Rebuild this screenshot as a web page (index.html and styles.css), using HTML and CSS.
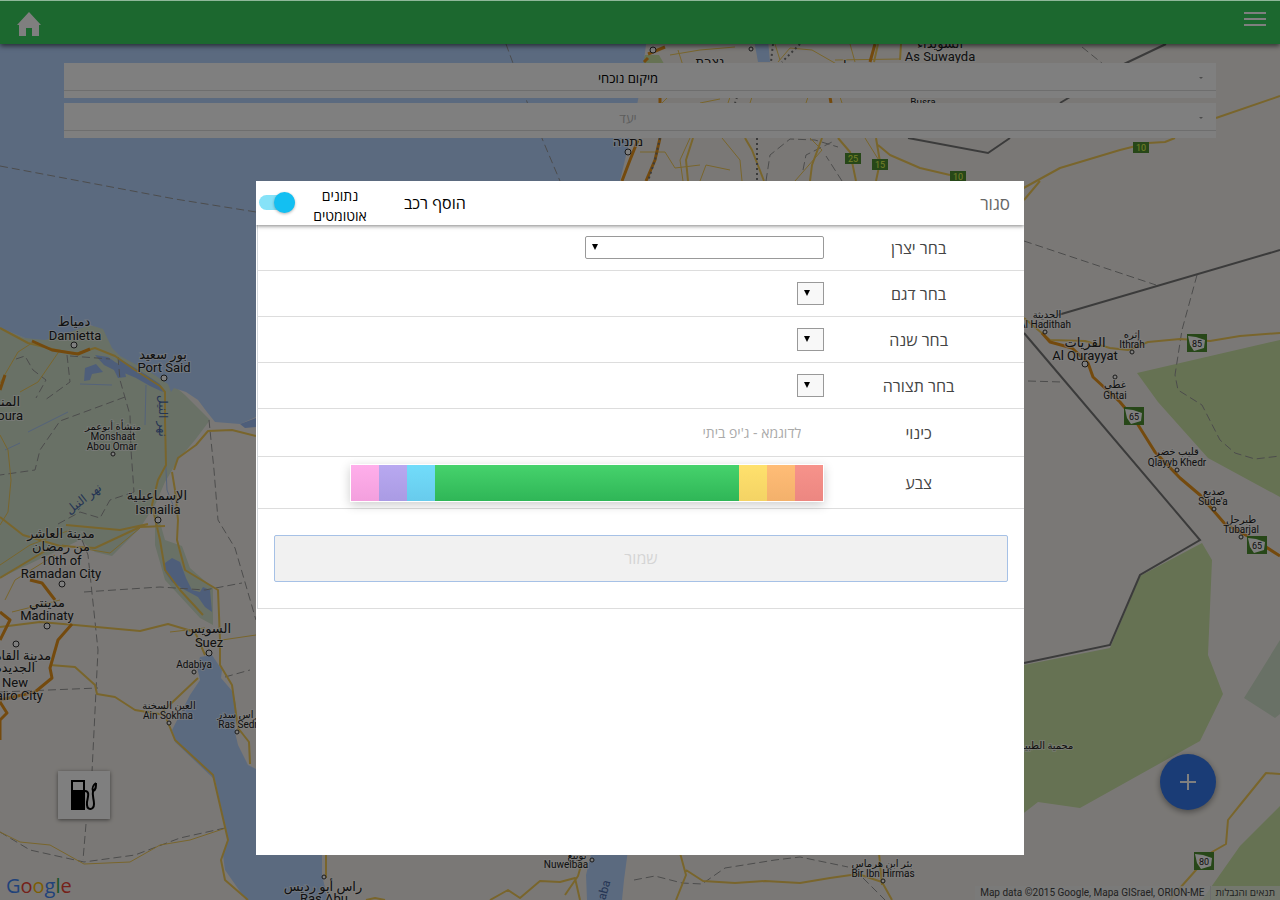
FILE: index.html
```
<!DOCTYPE html>
<html lang="he" dir="rtl">
    <head>
        <meta charset="utf-8">
        <meta name="viewport" content="width=device-width, initial-scale=1">
        <title>הוסף רכב</title>
        <link rel="stylesheet" href="styles.css">
    </head>
    <body>
        <svg class="map" viewBox="0 0 1280 900" preserveAspectRatio="xMidYMid slice" direction="ltr">
            <!-- land use -->
            <path class="delta" d="M0 328 25 338 60 335 85 325 103 327 115 348 165 378 185 395 210 420 195 440 178 460 165 482 155 505 140 528 112 556 95 552 80 540 0 578Z"/>
            <path class="delta" d="M155 505 165 540 182 546 190 568 213 588 213 625 200 618 165 580 155 545ZM1280 640 1244 698 1275 718 1280 714Z"/>
            <path class="park" d="M1137 373 1280 340 1280 497 1208 458 1158 402ZM1024 665 1110 648 1140 576 1202 543 1212 560 1208 655 1223 694 1200 741 1080 808 1038 802 1020 816 900 816 900 665ZM1280 806 1240 846 1202 900 1280 900Z"/>
            <path class="park" d="M645 55h14l8 14h-28z"/>
            <!-- water -->
            <path class="water" d="M0 0H652L640 90 632 130 620 181 600 400 256 417 240 424 215 422 207 412 198 400 186 392 174 388 171 392 168 384 150 372 120 356 112 348 103 329 90 325 65 334 45 340 25 338 0 328Z"/>
            <path class="lagoon" d="M85 368 96 364 103 372 92 374 90 380 84 381ZM95 355 108 357 115 362 124 367 126 377 118 378 114 370 104 365ZM118 358 132 366 145 374 160 384 163 392 150 386 136 378 122 372ZM240 424 256 418V427L245 428Z"/>
            <path class="water" d="M754 40H768L770 62H758Z"/>
            <path class="lagoon" d="M165 563 172 558 180 562 186 578 192 590 200 592 203 587 210 590 212 612 205 607 198 597 185 590 172 582 165 572Z"/>
            <path class="water" d="M200 657 212 655 222 670 221 678 233 692 236 705 235 732 238 745 248 765 256 769 322 850 322 875 328 900 246 900 225 870 223 855 228 840 215 780 175 742 172 730 190 695 200 680 197 667ZM592 850 586 875 587 900 622 900 624 880 628 850Z"/>
            <path class="stream" d="M165 400 166 470 167 490 175 510M146 385 145 425M80 384 112 385M28 432 68 412M5 450 20 443"/>
            <!-- administrative lines -->
            <g class="dashed">
                <path d="M0 166 85 182 175 199 256 212M506 44 530 110 560 181M16 359 25 356 33 370 46 380 36 398M67 355 70 382 45 400M118 357 120 380 130 415 131 450 134 492M125 397 60 421 40 450 35 470 0 475M209 420 214 470 218 520 235 548 256 620M82 540 88 555 98 650 92 772M84 592 160 587 205 590 242 583M86 824 83 860M0 832 30 850 84 862 135 855 180 838 225 828M225 677 250 670M58 524 80 512 100 518 110 500 134 492M70 356 110 359M0 692 98 688"/>
                <path d="M1024 241 1156 285M1197 275 1182 330 1175 375 1178 390 1202 405 1220 440 1235 453 1255 459 1280 456M1028 381 1062 382M1082 47 1103 64M766 181 770 155 790 139 815 140 838 147M803 170 806 155 832 142M842 181 826 156M634 880 655 876 682 883 702 884 725 868 750 864 775 860 800 857 848 867M863 878 885 900"/>
            </g>
            <!-- local roads -->
            <path class="road thin" d="M0 383 18 352 32 343M60 350 38 382 20 392M0 435 8 450 11 480 8 512 0 525M0 565 30 545 70 530M55 555 15 580 5 600M62 545 110 553 140 528M205 628 170 632M222 640 256 635M0 832 20 842 50 845 84 864 130 862 160 845 190 840 226 828M12 612 60 600"/>
            <path class="road thin" d="M640 152 665 152 675 168 700 165M690 138 680 160 683 181M678 50 685 72M670 55 700 50 735 47M812 50 840 66M778 62 790 48 812 50M835 60 900 59M795 181 822 150 810 138M865 138 880 162M850 44 855 62M780 60 775 44M722 138 740 160 742 181M808 97 806 103M752 97 750 103M730 97 728 103M720 99 700 103M840 97 842 103M668 97 662 103M700 181 706 165 730 170"/>
            <!-- main roads -->
            <path class="road" d="M0 328 28 343 52 349 75 354 95 348 115 356 135 370 160 386 165 392 165 420 166 465 158 480 152 505 160 540 165 570 180 590 203 615M172 472 175 490 178 520 177 540 185 570 218 590 220 640 220 665 232 685 238 728 249 742 250 764M0 517 23 535 60 546 95 548 140 527 165 526M66 525 120 530 148 524M0 578 50 548M174 470 178 458 196 445 208 431 232 430 256 436M0 627 40 622 75 625 140 631 168 624 195 632 205 655M50 665 75 667 95 685 97 694 115 697 135 710 165 715 175 740 213 775 228 840 221 860 225 880 248 900M162 712 198 678"/>
            <path class="road" d="M693 138 686 160 688 181M764 181 752 150 745 138M822 138 812 165 810 181M838 138 850 152 856 181M876 138 880 162 876 181M878 145 890 155 920 168 950 175M1020 190 1060 168 1120 150 1148 143 1165 142 1175 138M1216 118 1280 96M878 44 874 62M900 60 901 44M1024 200 1040 181M1024 318 1050 340 1085 341 1110 348 1128 350 1148 342 1180 339 1210 341 1240 336 1280 333M1280 774 1266 773 1240 805 1228 820 1226 844 1212 852 1180 888 1170 900M680 853 686 875 676 900M686 870 703 881 735 883 765 881 800 883 830 878 858 874 882 882 892 900M879 853 882 885M326 855 326 878M366 900 375 898 385 900M490 900 508 890 520 898 540 881 560 882 575 878 580 900M565 895 578 876 582 862"/>
            <path class="road highway" d="M0 390 5 375M32 341 52 350 78 354 90 349M30 580 42 583 55 600M0 612 10 620 0 640M72 624 58 640 50 668 52 678 35 692 0 700M0 702 7 713 0 720 0 740M1042 333 1050 342 1072 348 1088 363 1093 377 1120 402 1135 420 1155 452 1180 478 1200 495 1225 524 1255 540 1280 556M648 58 644 62M638 140 630 160 622 181M660 138 655 160 646 181M875 44 870 62M648 54 665 47M660 97 660 103M830 97 831 103"/>
            <!-- borders -->
            <path class="border" d="M773 44 771 62M800 44 782 62M660 138 655 160 648 181M757 138 757 181M737 97 735 103" stroke-dasharray="2 3"/>
            <path class="border" d="M908 138 988 153 1010 138M1060 103 1070 97M1124 64 1166 44M1058 315 1280 250M1024 333 1200 540 1140 575 1110 645 1024 663"/>
            <!-- route shields -->
            <g class="shield">
                <path d="M845 153h16v11h-16zM872 159h16v11h-16zM950 171h16v11h-16zM1133 142h16v11h-16z"/>
                <path d="M1187 334h20v18h-20zM1124 407h20v18h-20zM1247 536h20v18h-20zM1194 852h20v18h-20z"/>
            </g>
            <g class="shield-inner">
                <path d="M1188 336l8 1 9 3-1 8-10 3-4-6zM1125 409l8 1 9 3-1 8-10 3-4-6zM1248 538l8 1 9 3-1 8-10 3-4-6zM1195 854l8 1 9 3-1 8-10 3-4-6z"/>
            </g>
            <g class="shield-text green">
                <text x="853" y="162">25</text><text x="880" y="168">15</text><text x="958" y="180">10</text><text x="1141" y="151">10</text>
            </g>
            <g class="shield-text">
                <text x="1197" y="347">85</text><text x="1134" y="420">65</text><text x="1257" y="549">65</text><text x="1204" y="865">80</text>
            </g>
            <!-- towns -->
            <g class="town">
                <circle cx="74" cy="345" r="3"/><circle cx="164" cy="378" r="3"/><circle cx="158" cy="520" r="3"/><circle cx="62" cy="584" r="3"/><circle cx="47" cy="626" r="3"/><circle cx="16" cy="644" r="3"/><circle cx="209" cy="653" r="3"/><circle cx="653" cy="50" r="3"/><circle cx="1085" cy="364" r="3"/><circle cx="628" cy="152" r="3"/>
                <circle cx="113" cy="454" r="2"/><circle cx="194" cy="672" r="2"/><circle cx="169" cy="723" r="2"/><circle cx="237" cy="732" r="2"/><circle cx="1045" cy="332" r="2"/><circle cx="1132" cy="352" r="2"/><circle cx="1115" cy="377" r="2"/><circle cx="1177" cy="470" r="2"/><circle cx="1214" cy="509" r="2"/><circle cx="1241" cy="537" r="2"/><circle cx="883" cy="881" r="2"/><circle cx="324" cy="877" r="2"/><circle cx="592" cy="860" r="2"/><circle cx="751" cy="49" r="2"/>
            </g>
            <g class="city">
                <text x="74" y="326">دمياط</text><text x="75" y="340">Damietta</text>
                <text x="163" y="359">بور سعيد</text><text x="164" y="372">Port Said</text>
                <text x="157" y="500">الإسماعيلية</text><text x="158" y="514">Ismailia</text>
                <text x="61" y="538">مدينة العاشر</text><text x="61" y="551">من رمضان</text><text x="61" y="565">10th of</text><text x="61" y="578">Ramadan City</text>
                <text x="47" y="607">مدينتي</text><text x="47" y="620">Madinaty</text>
                <text x="208" y="633">السويس</text><text x="209" y="647">Suez</text>
                <text x="16" y="660">مدينة القاهرة</text><text x="15" y="672">الجديدة</text><text x="15" y="687">New</text><text x="15" y="700">Cairo City</text>
                <text x="-5" y="406">المنصورة</text><text x="-6" y="420">Mansoura</text>
                <text x="940" y="48">السويداء</text><text x="940" y="61">As Suwayda</text>
                <text x="628" y="146">נתניה</text><text x="710" y="66">נצרת</text><text x="855" y="70">درعا</text>
                <text x="1085" y="347">القريات</text><text x="1085" y="360">Al Qurayyat</text>
                <text x="323" y="891">راس أبو رديس</text><text x="324" y="903">Ras Abu</text>
            </g>
            <g class="village">
                <text x="113" y="430">منشأة أبوعمر</text><text x="113" y="440">Monshaat</text><text x="112" y="450">Abou Omar</text>
                <text x="194" y="668">Adabiya</text>
                <text x="169" y="709">العين السخنة</text><text x="168" y="719">Ain Sokhna</text>
                <text x="238" y="718">راس سدر</text><text x="238" y="728">Ras Sedr</text>
                <text x="1047" y="318">الحديثة</text><text x="1045" y="328">Al Hadithah</text>
                <text x="1132" y="338">إثره</text><text x="1132" y="348">Ithrah</text>
                <text x="1115" y="388">غطي</text><text x="1115" y="399">Ghtai</text>
                <text x="1177" y="455">قليب خضر</text><text x="1177" y="466">Qlayyb Khedr</text>
                <text x="1214" y="495">صديع</text><text x="1213" y="505">Sude'a</text>
                <text x="1241" y="523">طبرجل</text><text x="1241" y="533">Tubarjal</text>
                <text x="882" y="867">بئر ابن هرماس</text><text x="883" y="877">Bir Ibn Hirmas</text>
                <text x="577" y="859">نويبع</text><text x="566" y="868">Nuweibaa</text>
                <text x="923" y="106">Busra</text><text x="1045" y="749">محمية الطبيق</text>
            </g>
            <g class="river">
                <text transform="translate(86 502) rotate(-38)">نهر النيل</text>
                <text transform="translate(159 416) rotate(90)">نهر النيل</text>
                <text transform="translate(606 898) rotate(-75)">Aqaba</text>
            </g>
        </svg>

        <header class="topbar">
            <button class="icon-button" type="button" aria-label="תפריט">
                <svg width="22" height="16" viewBox="0 0 22 16"><path d="M0 1h22v2H0zM0 7h22v2H0zM0 13h22v2H0z" fill="#fff"/></svg>
            </button>
            <a class="home" href="#" aria-label="בית">
                <svg width="24" height="24" viewBox="0 0 24 24"><path d="M12 0 24 13H22V24H15V16H9V24H2V13H0Z" fill="#fff"/></svg>
            </a>
        </header>

        <form class="search" action="#">
            <div class="field">
                <button type="button" aria-label="בחר מוצא"></button>
                <input type="text" aria-label="מוצא" value="מיקום נוכחי">
            </div>
            <div class="field">
                <button type="button" aria-label="בחר יעד"></button>
                <input type="text" aria-label="יעד" placeholder="יעד">
            </div>
        </form>

        <button class="fuel" type="button" aria-label="תחנות דלק">
            <svg width="28" height="32" viewBox="0 0 28 32">
                <path d="M1 1h14v30H1zM3 3v8h10V3z" fill="#000" fill-rule="evenodd"/>
                <path d="M15 12c5 0 3 6 2 11-1 9 7 9 7 2 0-5-2-8-1-13M26 4c-4 3-4 5-3 8 3-1 3-4 3-8" fill="none" stroke="#000" stroke-width="2"/>
            </svg>
        </button>
        <button class="fab" type="button" aria-label="הוסף">
            <svg width="16" height="16" viewBox="0 0 16 16"><path d="M7 0h2v7h7v2H9v7H7V9H0V7h7z" fill="#fff"/></svg>
        </button>

        <div class="google" dir="ltr"><b class="blue">G</b><b class="red">o</b><b class="yellow">o</b><b class="blue">g</b><b class="green">l</b><b class="red">e</b></div>
        <footer class="credits" dir="ltr">
            <span>Map data ©2015 Google, Mapa GISrael, ORION-ME</span>
            <a href="#">תנאים והגבלות</a>
        </footer>

        <div class="overlay">
            <div class="modal" role="dialog" aria-labelledby="modal-title">
                <div class="modal-bar">
                    <button class="close" type="button">סגור</button>
                    <h1 id="modal-title">הוסף רכב</h1>
                    <label for="auto">נתונים אוטומטים</label>
                    <input class="toggle" id="auto" type="checkbox" checked>
                </div>
                <form class="car-form" action="#">
                    <div class="row">
                        <label for="maker">בחר יצרן</label>
                        <select class="wide" id="maker"><option></option></select>
                    </div>
                    <div class="row">
                        <label for="model">בחר דגם</label>
                        <select id="model" disabled><option></option></select>
                    </div>
                    <div class="row">
                        <label for="year">בחר שנה</label>
                        <select id="year" disabled><option></option></select>
                    </div>
                    <div class="row">
                        <label for="trim">בחר תצורה</label>
                        <select id="trim" disabled><option></option></select>
                    </div>
                    <div class="row nickname">
                        <label for="nick">כינוי</label>
                        <input type="text" id="nick" placeholder="לדוגמא - ג'יפ ביתי">
                    </div>
                    <div class="row color">
                        <span class="name" id="color-name">צבע</span>
                        <div class="swatches" role="radiogroup" aria-labelledby="color-name">
                            <input type="radio" name="color" class="c-red" aria-label="אדום">
                            <input type="radio" name="color" class="c-orange" aria-label="כתום">
                            <input type="radio" name="color" class="c-yellow" aria-label="צהוב">
                            <input type="radio" name="color" class="c-green" aria-label="ירוק" checked>
                            <input type="radio" name="color" class="c-blue" aria-label="תכלת">
                            <input type="radio" name="color" class="c-purple" aria-label="סגול">
                            <input type="radio" name="color" class="c-pink" aria-label="ורוד">
                        </div>
                    </div>
                    <div class="actions">
                        <button type="submit" disabled>שמור</button>
                    </div>
                </form>
            </div>
        </div>
    </body>
</html>
```
FILE: styles.css
```
*, *:after, *:before {
    box-sizing: border-box;
    margin: 0;
    padding: 0;
}
html, body {
    height: 100%;
}
body {
    font-family: "Open Sans", "Noto Sans", sans-serif;
    font-size: 14px;
    overflow: hidden;
    background: #f5f1ec;
}
button, input, select {
    font-family: inherit;
    border: none;
    background: none;
}
button {
    cursor: pointer;
}
svg {
    display: block;
}

/* map */
.map {
    position: absolute;
    top: 0;
    left: 0;
    width: 100%;
    height: 100%;
    font-family: Roboto, "DejaVu Sans", sans-serif;
}
.water {
    fill: #b6d4ff;
}
.lagoon {
    fill: #9cbcf5;
}
.delta {
    fill: #d2e2cc;
}
.park {
    fill: #cce4a6;
}
.map .stream, .road, .border, .dashed path {
    fill: none;
}
.stream {
    stroke: #a9c6f5;
}
.road {
    stroke: #f2cb58;
    stroke-width: 2;
    stroke-linejoin: round;
}
.road.thin {
    stroke-width: 1;
}
.road.highway {
    stroke: #e8951c;
    stroke-width: 3;
}
.border {
    stroke: #777;
    stroke-width: 2;
}
.dashed path {
    stroke: #999;
    stroke-dasharray: 8 4;
}
.shield {
    fill: #4e8f30;
}
.shield-inner {
    fill: #fff;
}
.shield-text {
    font-size: 9px;
    text-anchor: middle;
    fill: #222;
}
.shield-text.green {
    fill: #e8ff50;
}
.town {
    fill: #fff;
    stroke: #333;
}
.city, .village {
    text-anchor: middle;
    fill: #222;
    stroke: rgba(255,255,255,0.6);
    stroke-width: 2px;
    paint-order: stroke;
}
.city {
    font-size: 13px;
}
.village {
    font-size: 10px;
}
.river {
    font-size: 12px;
    text-anchor: middle;
    fill: #4a6aa8;
}

/* page behind the dialog */
.topbar {
    position: relative;
    display: flex;
    justify-content: space-between;
    align-items: flex-start;
    height: 44px;
    padding: 10px 14px 0 17px;
    border-top: 1px solid #8fb79a;
    background: #38d05e;
    box-shadow: 0 2px 5px rgba(0,0,0,0.6);
}
.home {
    padding-top: 1px;
}
.search {
    position: relative;
    display: flex;
    flex-direction: column;
    gap: 5px;
    margin: 19px 5% 0;
}
.field {
    display: flex;
    height: 35px;
    padding-bottom: 7px;
    background: #fff;
}
.field button {
    width: 24px;
    border-bottom: 1px solid #ddd;
}
.field button:after {
    content: "";
    display: block;
    width: 4px;
    margin: 4px 13px 0 0;
    border: 2px solid transparent;
    border-top-color: #999;
}
.field input {
    flex: 1;
    min-width: 0;
    padding-top: 2px;
    font-size: 13px;
    text-align: center;
    border-bottom: 1px solid #ddd;
}
.field input::placeholder {
    color: #bbb;
}
.fuel {
    position: absolute;
    left: 58px;
    bottom: 81px;
    padding: 8px 12px;
    background: #fff;
    box-shadow: 0 1px 4px rgba(0,0,0,0.5);
}
.fab {
    position: absolute;
    right: 5%;
    bottom: 90px;
    display: flex;
    align-items: center;
    justify-content: center;
    width: 56px;
    height: 56px;
    border-radius: 50%;
    background: #3478ec;
    box-shadow: 0 2px 6px rgba(0,0,0,0.4);
}
.google {
    position: absolute;
    left: 6px;
    bottom: 0;
    font-size: 20px;
    line-height: 28px;
}
.google b {
    font-weight: 500;
}
.blue {
    color: #4285f4;
}
.red {
    color: #ea4335;
}
.yellow {
    color: #fbbc05;
}
.green {
    color: #34a853;
}
.credits {
    position: absolute;
    right: 0;
    bottom: 0;
    display: flex;
    font: 10px/14px Roboto, "Open Sans", sans-serif;
    color: #444;
    background: rgba(245,245,245,0.7);
}
.credits span, .credits a {
    padding: 0 5px;
}
.credits a {
    color: #444;
    text-decoration: none;
    border-left: 1px solid #ddd;
}

/* dialog */
.overlay {
    position: fixed;
    top: 1px;
    right: 0;
    bottom: 0;
    left: 0;
    padding: 20vh 20% 5vh;
    background: rgba(0,0,0,0.5);
}
.modal {
    height: 100%;
    overflow: auto;
    background: #fff;
}
.modal-bar {
    position: relative;
    display: flex;
    align-items: center;
    height: 44px;
    padding: 0 14px 0 3px;
    box-shadow: 0 1px 4px rgba(0,0,0,0.5);
}
.close {
    font-size: 17px;
    color: #666;
    margin-left: auto;
}
.modal-bar h1 {
    font-size: 16px;
    font-weight: 400;
}
.modal-bar label {
    width: 80px;
    margin: 6px 24px 0 5px;
    font-size: 14px;
    line-height: 20px;
    text-align: center;
}
.toggle {
    appearance: none;
    position: relative;
    width: 36px;
    height: 15px;
    margin-bottom: 2px;
    border-radius: 8px;
    background: #86e2f8;
    cursor: pointer;
}
.toggle:after {
    content: "";
    position: absolute;
    top: -3px;
    right: 0;
    width: 21px;
    height: 21px;
    border-radius: 50%;
    background: #13bff2;
    box-shadow: 0 1px 3px rgba(0,0,0,0.3);
}
.car-form {
    margin-left: 1px;
    border-left: 1px solid #d5d9dd;
}
.row {
    display: flex;
    align-items: center;
    height: 46px;
    padding-right: 11px;
    border-bottom: 1px solid #ddd;
}
.row label, .name {
    flex: 0 0 25%;
    font-size: 16px;
    line-height: 20px;
    color: #444;
    text-align: center;
}
select {
    appearance: none;
    width: 27px;
    height: 23px;
    border: 1px solid #999;
    background: #fff url("data:image/svg+xml,%3Csvg xmlns='http://www.w3.org/2000/svg' width='6' height='6'%3E%3Cpath d='M0 0h6L3 6z'/%3E%3C/svg%3E") no-repeat 6px 7px;
}
select:disabled {
    background-color: #f8f8f8;
    opacity: 1;
}
select.wide {
    width: 239px;
    border-radius: 2px;
}
.nickname {
    height: 48px;
}
.nickname input {
    flex: 1;
    height: 32px;
    padding: 0 23px;
    font-size: 14px;
}
.nickname input::placeholder {
    color: #aaa;
}
.color {
    height: 52px;
}
.swatches {
    display: flex;
    flex: 1;
    height: 38px;
    margin-left: 92px;
    border: 1px solid #fff;
    box-shadow: 0 3px 10px rgba(0,0,0,0.2);
}
.swatches input {
    appearance: none;
    width: 28px;
    opacity: 0.7;
    cursor: pointer;
}
.swatches input:checked {
    flex: 1;
    opacity: 1;
}
.c-red {
    background: linear-gradient(#f36459, #e4534b);
}
.c-orange {
    background: linear-gradient(#ffa03c, #ee8f2c);
}
.c-yellow {
    background: linear-gradient(#ffd42e, #efc022);
}
.c-green {
    background: linear-gradient(#46d26c, #2fb657);
}
.c-blue {
    background: linear-gradient(#35cdf8, #27b5e4);
}
.c-purple {
    background: linear-gradient(#9a83ea, #8570d8);
}
.c-pink {
    background: linear-gradient(#ff8ce2, #ee76cf);
}
.actions {
    padding: 26px 16px;
    border-bottom: 1px solid #ddd;
}
.actions button {
    width: 100%;
    height: 47px;
    padding-bottom: 2px;
    font-size: 16px;
    color: #d5d5d5;
    border: 1px solid #a6c1e6;
    border-radius: 2px;
    background: #f1f1f1;
}
```
